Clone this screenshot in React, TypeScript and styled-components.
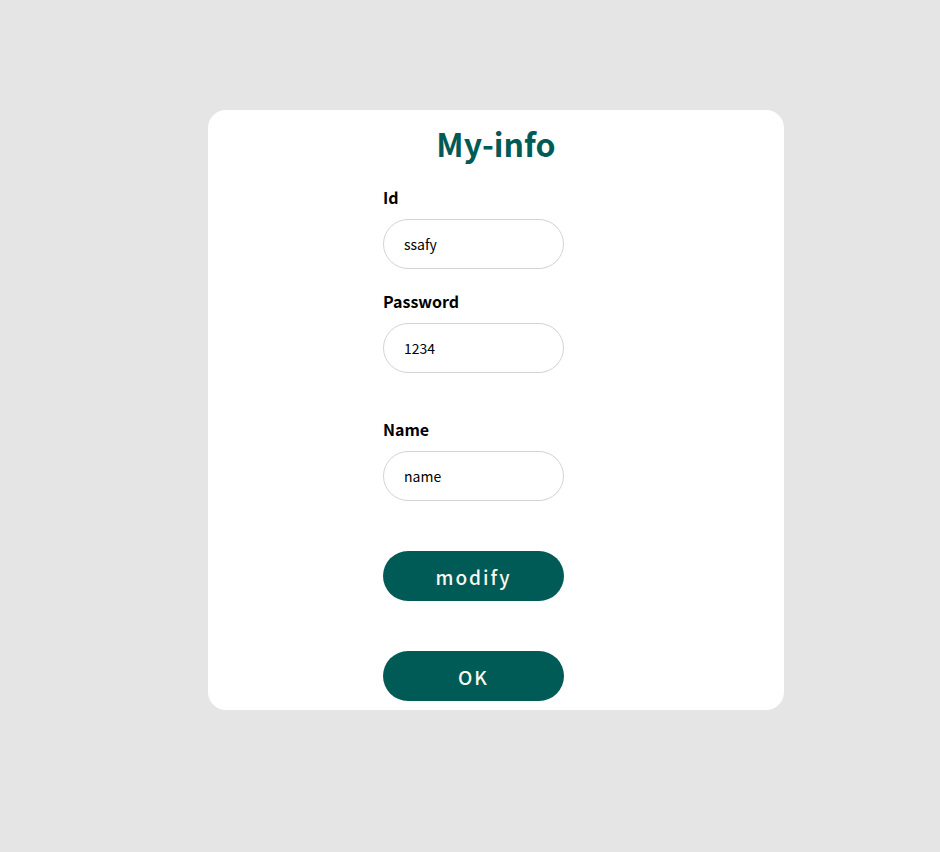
import React from 'react'
import styled, { createGlobalStyle } from 'styled-components'

const GlobalStyle = createGlobalStyle`
  html, body {
    margin: 0;
    padding: 0;
    background: #e5e5e5;
    font-family: "Noto Sans CJK KR", "Noto Sans", sans-serif;
  }
`

const Page = styled.div`
  display: flex;
  justify-content: center;
  padding: 110px 0 0 52px;
  min-height: 852px;
  box-sizing: border-box;
`

const Card = styled.div`
  width: 576px;
  height: 600px;
  box-sizing: border-box;
  background: #ffffff;
  border-radius: 18px;
  padding: 14px 0 9px;
  display: flex;
  flex-direction: column;
  align-items: center;
`

const Title = styled.h1`
  margin: 0;
  font-size: 32px;
  line-height: 38px;
  font-weight: 700;
  color: #005a55;
`

const Form = styled.div`
  width: 226px;
  display: flex;
  flex-direction: column;
  margin-top: 23px;
`

const Field = styled.div<{ $gap?: number }>`
  display: flex;
  flex-direction: column;
  gap: 10px;
  margin-top: ${p => p.$gap ?? 0}px;
`

const Label = styled.label`
  font-size: 16px;
  line-height: 24px;
  font-weight: 700;
  color: #000;
`

const Input = styled.input`
  width: 181px;
  height: 50px;
  box-sizing: border-box;
  border: 1px solid #d3d3d3;
  border-radius: 25px;
  padding: 0 20px;
  font-family: inherit;
  font-size: 14px;
  color: #000;
  background: #fff;
  outline: none;
`

const Button = styled.button<{ $gap: number }>`
  width: 181px;
  height: 50px;
  margin-top: ${p => p.$gap}px;
  border: none;
  border-radius: 25px;
  background: #005a55;
  color: #f8f8ee;
  font-family: inherit;
  font-size: 19px;
  font-weight: 500;
  letter-spacing: 2px;
  cursor: pointer;
`

function App() {
  return (
    <Page>
      <GlobalStyle />
      <Card>
        <Title>My-info</Title>
        <Form>
          <Field>
            <Label>Id</Label>
            <Input defaultValue="ssafy" />
          </Field>
          <Field $gap={20}>
            <Label>Password</Label>
            <Input defaultValue="1234" />
          </Field>
          <Field $gap={44}>
            <Label>Name</Label>
            <Input defaultValue="name" />
          </Field>
          <Button $gap={50}>modify</Button>
          <Button $gap={50}>OK</Button>
        </Form>
      </Card>
    </Page>
  )
}

export default App
